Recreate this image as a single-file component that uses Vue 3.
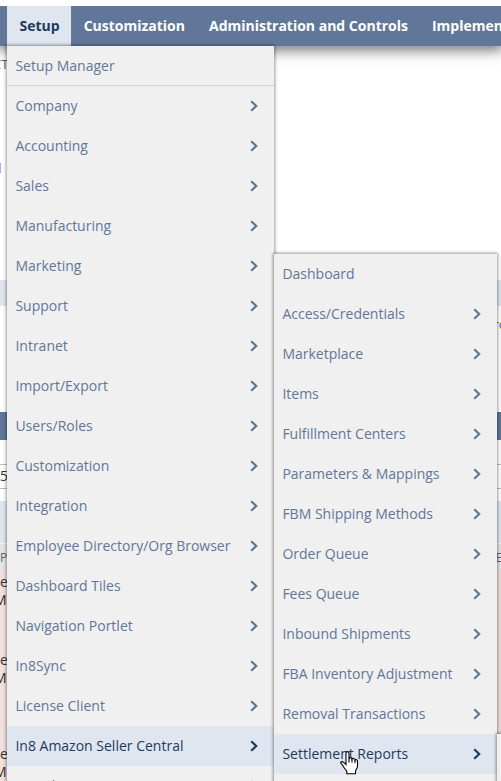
<template>
  <div class="screen">
    <!-- page behind the menus -->
    <div class="page">
      <div class="top-area">
        <span class="crumb">CT</span>
        <span class="link">I</span>
      </div>
      <div class="band light"></div>
      <div class="gap"><span class="side-text">rc</span></div>
      <div class="band dark"></div>
      <div class="filters">
        <div class="field">5</div>
      </div>
      <div class="toolbar"></div>
      <div class="table-head">
        <span>P</span>
        <span class="last">E</span>
      </div>
      <div v-for="(row, index) in rows" :key="index" class="table-row">
        <span>{{ row[0] }}</span>
        <span>{{ row[1] }}</span>
      </div>
    </div>

    <!-- navigation bar -->
    <nav class="navbar">
      <a
        v-for="tab in tabs"
        :key="tab"
        class="tab"
        :class="{ active: tab === 'Setup' }"
      >{{ tab }}</a>
    </nav>

    <!-- menus -->
    <ul class="menu main-menu">
      <li
        v-for="item in setupItems"
        :key="item"
        class="item"
        :class="{ active: item === 'In8 Amazon Seller Central', divided: item === 'Setup Manager' }"
      >
        <span class="label">{{ item }}</span>
        <svg v-if="item !== 'Setup Manager'" class="arrow" width="8" height="12" viewBox="0 0 8 12">
          <path d="M1.2 1.2 6.2 6 1.2 10.8" />
        </svg>
      </li>
    </ul>

    <ul class="menu sub-menu">
      <li
        v-for="item in amazonItems"
        :key="item"
        class="item"
        :class="{ active: item === 'Settlement Reports' }"
      >
        <span class="label">{{ item }}</span>
        <svg v-if="item && item !== 'Dashboard'" class="arrow" width="8" height="12" viewBox="0 0 8 12">
          <path d="M1.2 1.2 6.2 6 1.2 10.8" />
        </svg>
      </li>
    </ul>

    <div class="menu next-menu"></div>

    <svg class="pointer" width="19" height="24" viewBox="0 0 19 24">
      <path
        d="M6 1.9C6 .2 9 .2 9 1.9V7.4C9.6 6.2 12 6.5 12 8 12.8 7 15 7.3 15 8.9 16 8.2 17.5 8.8 17.5 10.2V15C17.5 17 16 18.6 15.5 20V22.8H6.8V20.2C5.3 18.5 3.6 16.2 2.4 14 1.5 12.5.3 12 .8 11.2 1.9 9.9 4 11 6 13.5Z"
      />
      <path d="M9 7V11.5M12 8V11.5M15 9V12" />
    </svg>
  </div>
</template>

<script setup>
const tabs = ["Setup", "Customization", "Administration and Controls", "Implementation"];

const setupItems = [
  "Setup Manager",
  "Company",
  "Accounting",
  "Sales",
  "Manufacturing",
  "Marketing",
  "Support",
  "Intranet",
  "Import/Export",
  "Users/Roles",
  "Customization",
  "Integration",
  "Employee Directory/Org Browser",
  "Dashboard Tiles",
  "Navigation Portlet",
  "In8Sync",
  "License Client",
  "In8 Amazon Seller Central",
  "Translation",
];

const amazonItems = [
  "Dashboard",
  "Access/Credentials",
  "Marketplace",
  "Items",
  "Fulfillment Centers",
  "Parameters & Mappings",
  "FBM Shipping Methods",
  "Order Queue",
  "Fees Queue",
  "Inbound Shipments",
  "FBA Inventory Adjustment",
  "Removal Transactions",
  "Settlement Reports",
  "",
];

const rows = [
  ["e", "M"],
  ["e", "M"],
  ["e", "M"],
];
</script>

<style>
body {
  overflow: hidden;
}
</style>

<style scoped>
.screen {
  position: relative;
  width: 501px;
  height: 781px;
  overflow: hidden;
  background: #fff;
  font-family: "Open Sans", sans-serif;
  font-size: 14px;
  color: #333;
}

.page {
  display: flex;
  flex-direction: column;
}

.top-area {
  display: flex;
  flex-direction: column;
  height: 280px;
  box-sizing: border-box;
  padding-top: 55px;
}

.crumb {
  margin-left: -7px;
  font-size: 13px;
  line-height: 18px;
  color: #666;
}

.link {
  margin: 85px 0 0 -3px;
  line-height: 20px;
  font-weight: bold;
  color: #7a3fb0;
}

.band {
  height: 26px;
}

.band.light {
  background: #dfe6ef;
}

.band.dark {
  height: 28px;
  background: #607799;
}

.gap {
  display: flex;
  justify-content: flex-end;
  height: 106px;
}

.side-text {
  margin: 8px -4px 0 0;
  line-height: 20px;
  font-size: 13px;
  color: #666;
}

.filters {
  height: 61px;
  box-sizing: border-box;
  padding-top: 24px;
}

.field {
  height: 23px;
  border-top: 1px solid #bbb;
  border-bottom: 1px solid #bbb;
  line-height: 22px;
}

.toolbar {
  height: 42px;
  background: #dfe6ef;
  border-bottom: 1px solid #f6f6f6;
}

.table-head {
  display: flex;
  justify-content: space-between;
  height: 27px;
  line-height: 27px;
  font-size: 12px;
  color: #666;
  background: #e4e4e4;
}

.last {
  margin-right: -1px;
}

.table-row {
  display: flex;
  flex: none;
  flex-direction: column;
  height: 78px;
  box-sizing: border-box;
  padding-top: 2px;
  line-height: 18px;
  background: #f2e0de;
}

.table-row:nth-last-child(2) {
  height: 94px;
}

.table-row span + span {
  margin-left: -6px;
}

.navbar {
  position: absolute;
  top: 6px;
  left: 0;
  display: flex;
  width: 501px;
  height: 40px;
  box-sizing: border-box;
  padding-left: 7px;
  background: #607799;
  box-shadow: 0 3px 12px 2px rgba(0, 0, 0, 0.5);
  clip-path: inset(0 0 -24px 0);
}

.tab {
  flex: none;
  padding: 0 11.5px 0 12.5px;
  line-height: 40px;
  font-weight: bold;
  color: #fff;
}

.tab.active {
  background: #dfe6ef;
  color: #1f3a5f;
}

.menu {
  position: absolute;
  margin: 0;
  padding: 0;
  list-style: none;
  background: #f0f0f0;
  box-shadow: 0 0 3px 1px rgba(0, 0, 0, 0.4);
}

.main-menu {
  top: 46px;
  left: 7px;
  width: 267px;
}

.sub-menu {
  top: 254px;
  left: 274px;
  width: 223px;
}

.next-menu {
  top: 734px;
  left: 497px;
  width: 223px;
  height: 200px;
}

.item {
  display: flex;
  align-items: center;
  justify-content: space-between;
  height: 40px;
  box-sizing: border-box;
  padding: 0 16px 0 8.4px;
  white-space: nowrap;
  color: #607799;
}

.label {
  padding-bottom: 2px;
}

.item.divided {
  border-bottom: 1px solid #d0d3da;
}

.item.divided .label {
  padding-bottom: 0;
}

.item.active {
  background: #dfe6ef;
  color: #1f3a5f;
}

.arrow {
  fill: none;
  stroke: currentColor;
  stroke-width: 2.2;
}

.pointer {
  position: absolute;
  top: 751px;
  left: 340px;
  fill: #fff;
  stroke: #000;
  stroke-width: 1.1;
}
</style>
